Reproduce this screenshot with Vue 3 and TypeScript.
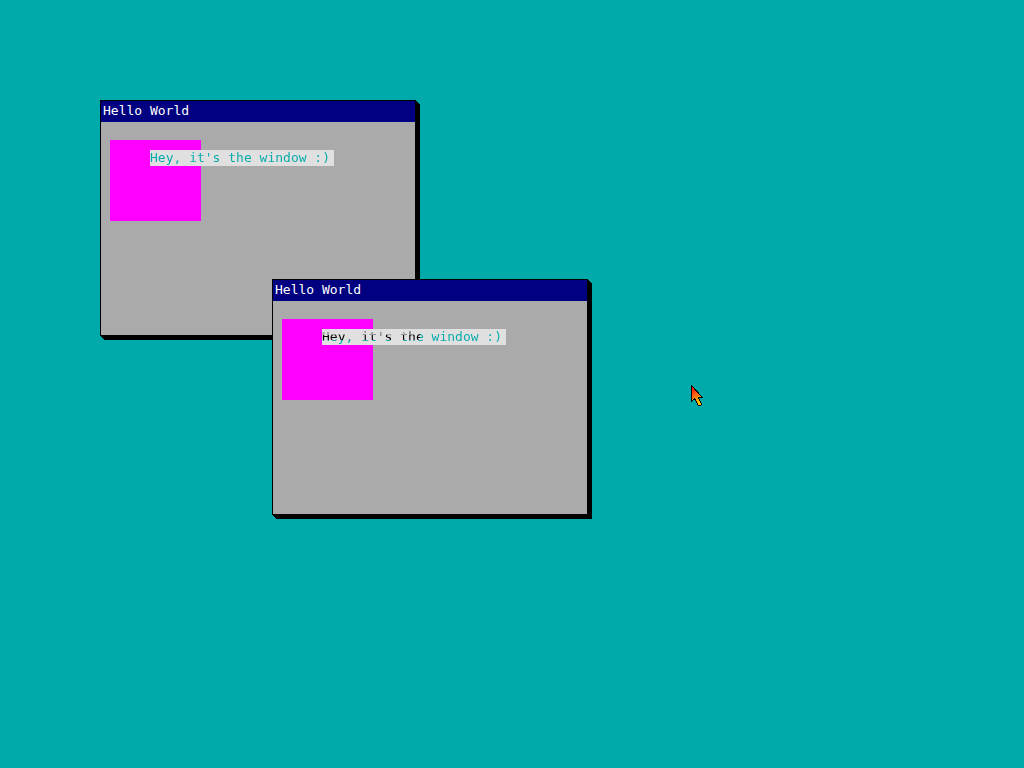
<script setup lang="ts">
interface DesktopWindow {
  id: number
  title: string
  message: string
  x: number
  y: number
  overlapping: boolean
}

const windows: DesktopWindow[] = [
  { id: 1, title: 'Hello World', message: "Hey, it's the window :)", x: 100, y: 100, overlapping: false },
  { id: 2, title: 'Hello World', message: "Hey, it's the window :)", x: 272, y: 279, overlapping: true },
]
const pointer = { x: 691, y: 385 }
</script>

<template>
  <main class="desktop">
    <section
      v-for="win in windows"
      :key="win.id"
      class="window"
      :style="{ left: win.x + 'px', top: win.y + 'px' }"
    >
      <header class="title-bar">{{ win.title }}</header>
      <div class="content">
        <div class="block">
          <p class="label"><span class="cutout" :class="{ layered: win.overlapping }">{{ win.message }}</span></p>
        </div>
      </div>
    </section>
    <svg
      class="pointer"
      :style="{ left: pointer.x + 'px', top: pointer.y + 'px' }"
      width="13"
      height="21"
      viewBox="0 0 13 21"
      aria-hidden="true"
    >
      <defs>
        <linearGradient id="flame" gradientUnits="userSpaceOnUse" x1="1" y1="4" x2="8" y2="17">
          <stop offset="0" stop-color="#ff1800" />
          <stop offset="0.5" stop-color="#ff6a10" />
          <stop offset="1" stop-color="#ffc000" />
        </linearGradient>
      </defs>
      <path
        d="M.5 .5V16.5L3.5 13.5L7.5 20.5H9.5L10.5 19.5L7.5 12.5H11.5Z"
        fill="url(#flame)"
        stroke="#000"
        shape-rendering="crispEdges"
      />
    </svg>
  </main>
</template>

<style>
body {
  background: #00aaaa;
}
</style>

<style scoped>
.desktop {
  position: relative;
  min-height: 100vh;
  overflow: hidden;
  background: #00aaaa;
  font-family: "DejaVu Sans Mono", monospace;
  font-size: 13px;
  line-height: 16px;
}

.window {
  position: absolute;
  box-sizing: border-box;
  width: 316px;
  min-height: 236px;
  border: 1px solid #000;
  background: #aaaaaa;
  box-shadow: 1px 1px #000, 2px 2px #000, 3px 3px #000, 4px 4px #000;
}

.title-bar {
  padding: 2px 2px 3px;
  background: #000080;
  color: #fff;
}

.content {
  padding: 18px 9px;
}

.block {
  box-sizing: border-box;
  width: 91px;
  height: 81px;
  padding: 10px 0 0 40px;
  background: #ff00ff;
}

.label {
  width: 184px;
  margin: 0;
  background: #e0e0e0;
  white-space: nowrap;
}

.cutout {
  display: block;
  color: transparent;
  background-color: #00aaaa;
  background-clip: text;
  -webkit-background-clip: text;
}

.layered {
  background-image: linear-gradient(#aaaaaa, #aaaaaa), linear-gradient(#000, #000);
  background-repeat: no-repeat;
  background-size: 93px 6px, 98px 11px;
}

.pointer {
  position: absolute;
}
</style>
